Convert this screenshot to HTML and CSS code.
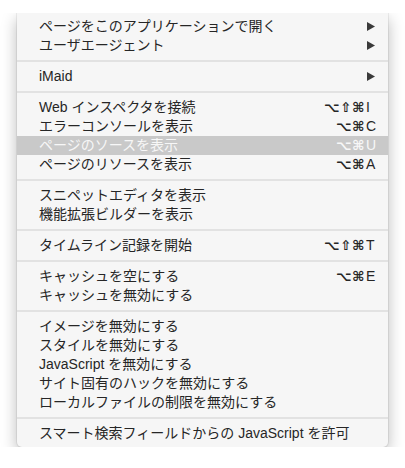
FILE: index.html
```html
<!DOCTYPE html>
<html lang="ja">
<head>
<meta charset="utf-8">
<link rel="stylesheet" href="styles.css">
</head>
<body>
<div class="menu">
  <div class="row"><span class="label">ページをこのアプリケーションで開く</span><svg class="arrow" viewBox="0 0 8 9"><polygon points="0,0 8,4.5 0,9"/></svg></div>
  <div class="row"><span class="label">ユーザエージェント</span><svg class="arrow" viewBox="0 0 8 9"><polygon points="0,0 8,4.5 0,9"/></svg></div>
  <div class="sep"></div>
  <div class="row"><span class="label">iMaid</span><svg class="arrow" viewBox="0 0 8 9"><polygon points="0,0 8,4.5 0,9"/></svg></div>
  <div class="sep"></div>
  <div class="row"><span class="label">Web インスペクタを接続</span><span class="sc"><span class="mods">⌥⇧⌘</span><span class="key">I</span></span></div>
  <div class="row"><span class="label">エラーコンソールを表示</span><span class="sc"><span class="mods">⌥⌘</span><span class="key">C</span></span></div>
  <div class="row hl"><span class="label">ページのソースを表示</span><span class="sc"><span class="mods">⌥⌘</span><span class="key">U</span></span></div>
  <div class="row"><span class="label">ページのリソースを表示</span><span class="sc"><span class="mods">⌥⌘</span><span class="key">A</span></span></div>
  <div class="sep"></div>
  <div class="row"><span class="label">スニペットエディタを表示</span></div>
  <div class="row"><span class="label">機能拡張ビルダーを表示</span></div>
  <div class="sep"></div>
  <div class="row"><span class="label">タイムライン記録を開始</span><span class="sc"><span class="mods">⌥⇧⌘</span><span class="key">T</span></span></div>
  <div class="sep"></div>
  <div class="row"><span class="label">キャッシュを空にする</span><span class="sc"><span class="mods">⌥⌘</span><span class="key">E</span></span></div>
  <div class="row"><span class="label">キャッシュを無効にする</span></div>
  <div class="sep"></div>
  <div class="row"><span class="label">イメージを無効にする</span></div>
  <div class="row"><span class="label">スタイルを無効にする</span></div>
  <div class="row"><span class="label">JavaScript を無効にする</span></div>
  <div class="row"><span class="label">サイト固有のハックを無効にする</span></div>
  <div class="row"><span class="label">ローカルファイルの制限を無効にする</span></div>
  <div class="sep"></div>
  <div class="row"><span class="label">スマート検索フィールドからの JavaScript を許可</span></div>
</div>
</body>
</html>
```
FILE: styles.css
```css
html, body {
  margin: 0;
  padding: 0;
  background: #ffffff;
}
body {
  padding: 13px 0 0 17px;
  font-family: "Liberation Sans", "Noto Sans CJK JP", sans-serif;
  font-size: 14px;
  color: #262626;
}
.menu {
  width: 371px;
  box-sizing: border-box;
  background: #f6f6f6;
  padding: 4px 0;
  border-radius: 0 0 5px 5px;
  box-shadow: 0 0 0 1px rgba(0,0,0,0.06), 0 6px 16px rgba(0,0,0,0.28);
  clip-path: inset(0 -40px -40px -40px);
}
.row {
  height: 19px;
  display: flex;
  align-items: center;
  padding: 0 11px 0 22px;
  line-height: 19px;
  white-space: nowrap;
}
.label {
  flex: 1;
}
.row.hl {
  background: #c9c9c9;
  color: #f7f7f7;
}
.sep {
  height: 2px;
  margin: 5px 0;
  background: #e2e2e2;
}
.arrow {
  width: 8px;
  height: 9px;
  margin-right: 2px;
  fill: #3a3a3a;
}
.sc {
  display: flex;
  align-items: center;
}
.mods {
  font-family: "DejaVu Sans", sans-serif;
  font-size: 13.5px;
  font-weight: bold;
  letter-spacing: 0.5px;
}
.key {
  width: 11px;
  padding-left: 1px;
  text-align: left;
}
```
